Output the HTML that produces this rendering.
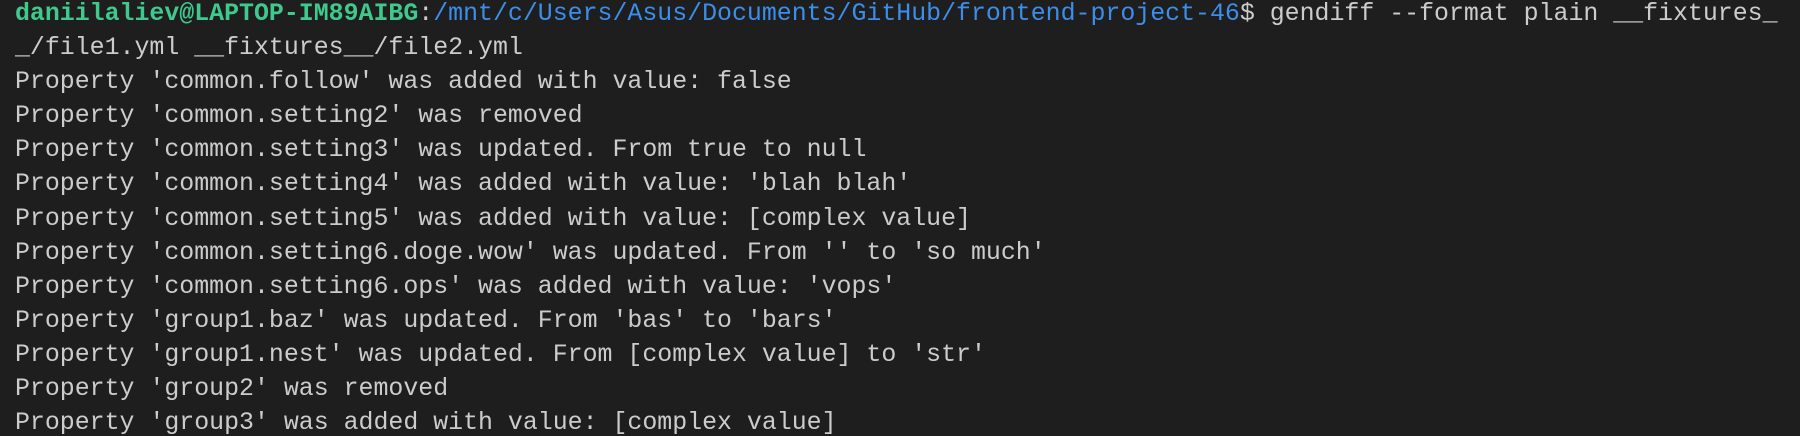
<!DOCTYPE html>
<html><head><meta charset="utf-8"><style>
html,body{margin:0;padding:0;background:#1e1e1e;width:1800px;height:436px;overflow:hidden}
pre{margin:-3px 0 0 0;padding:0 0 0 15px;font-family:"Liberation Mono",monospace;font-size:24.9px;line-height:34.1px;color:#cccccc;white-space:pre}
.g{color:#3fc98c;font-weight:bold}.b{color:#3b8eea}
</style></head><body><pre><span class="g">daniilaliev@LAPTOP-IM89AIBG</span>:<span class="b">/mnt/c/Users/Asus/Documents/GitHub/frontend-project-46</span>$ gendiff --format plain __fixtures_
_/file1.yml __fixtures__/file2.yml
Property 'common.follow' was added with value: false
Property 'common.setting2' was removed
Property 'common.setting3' was updated. From true to null
Property 'common.setting4' was added with value: 'blah blah'
Property 'common.setting5' was added with value: [complex value]
Property 'common.setting6.doge.wow' was updated. From '' to 'so much'
Property 'common.setting6.ops' was added with value: 'vops'
Property 'group1.baz' was updated. From 'bas' to 'bars'
Property 'group1.nest' was updated. From [complex value] to 'str'
Property 'group2' was removed
Property 'group3' was added with value: [complex value]</pre></body></html>
